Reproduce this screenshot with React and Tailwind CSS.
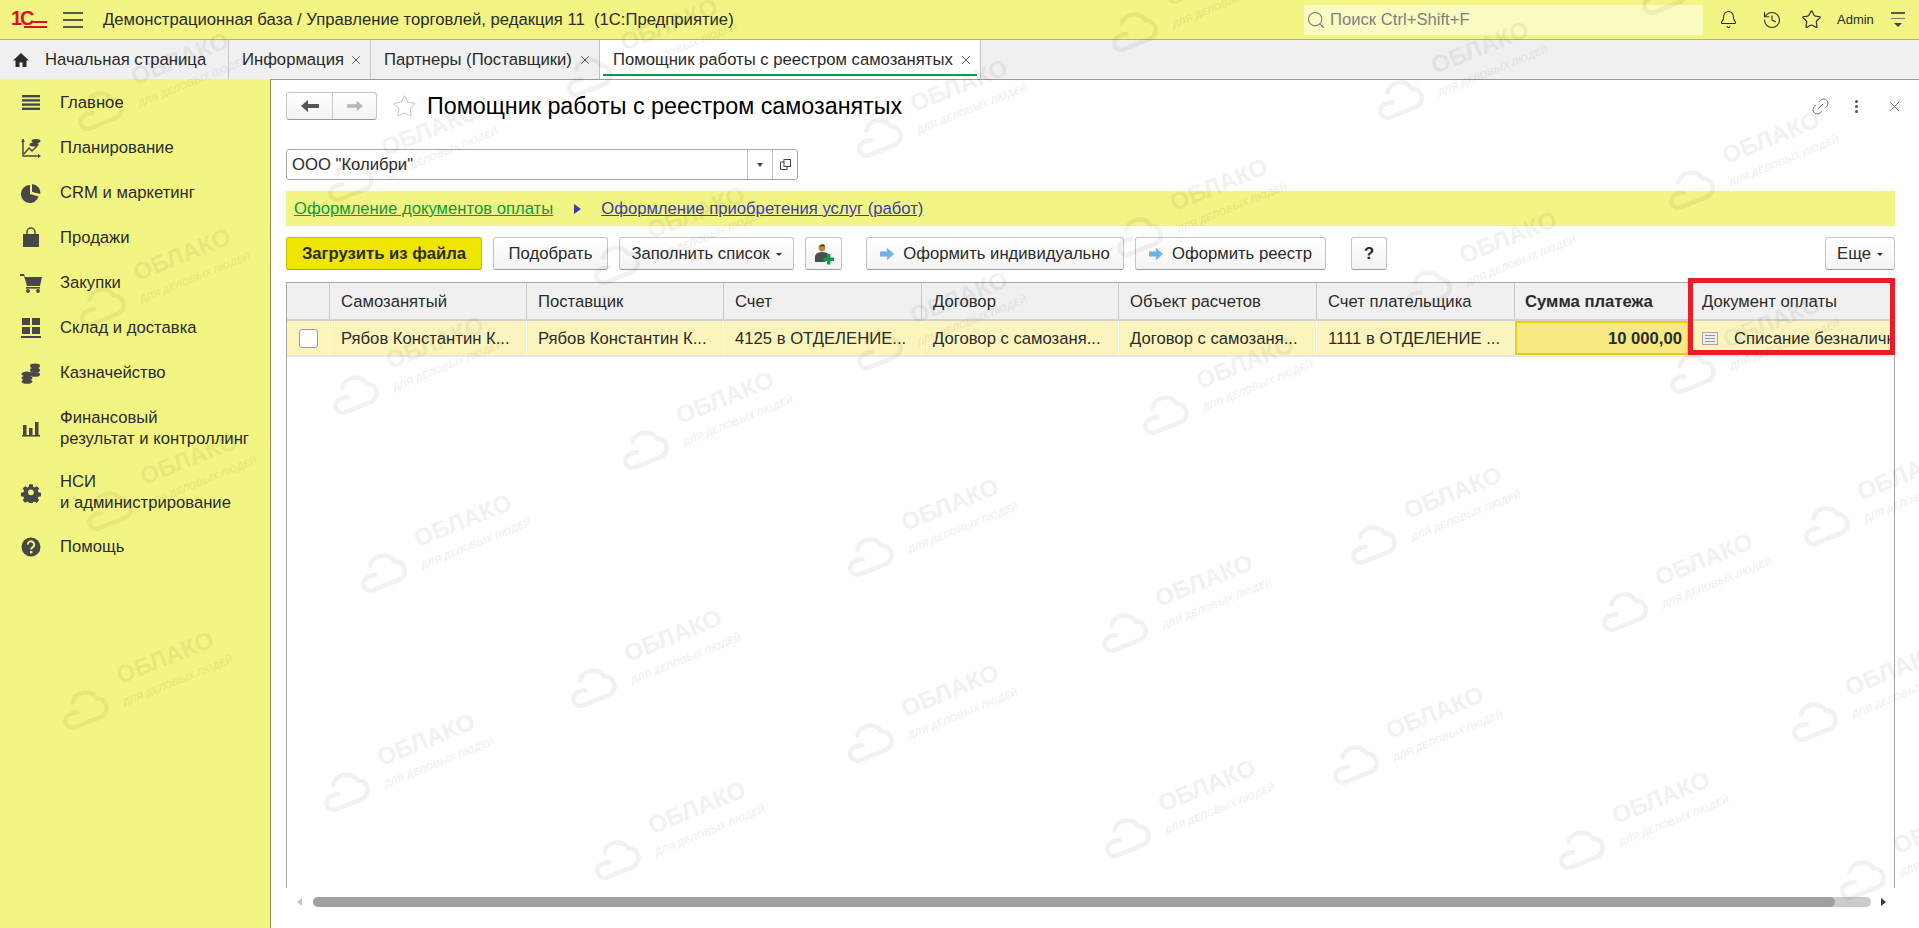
import React from "react";
import { Bell, History, Star, Link2, X, Search } from "lucide-react";

const CLOUDS = [
  [98, 111], [100, 307], [107, 511], [83, 710], [348, 182], [353, 395], [381, 573], [344, 792],
  [614, 265], [587, 77], [643, 450], [591, 688], [615, 860], [877, 138], [877, 350], [868, 557],
  [868, 743], [1132, 32], [1137, 237], [1163, 415], [1122, 633], [1125, 838], [1398, 100],
  [1426, 290], [1371, 545], [1353, 765], [1689, 190], [1690, 374], [1622, 612], [1579, 850],
  [1662, -5], [1824, 526], [1812, 722], [1860, 880],
];

const MENU = [
  { label: ["Главное"], icon: "lines", height: "h-[45px]" },
  { label: ["Планирование"], icon: "plan", height: "h-[45px]" },
  { label: ["CRM и маркетинг"], icon: "pie", height: "h-[45px]" },
  { label: ["Продажи"], icon: "bag", height: "h-[45px]" },
  { label: ["Закупки"], icon: "cart", height: "h-[45px]" },
  { label: ["Склад и доставка"], icon: "grid", height: "h-[45px]" },
  { label: ["Казначейство"], icon: "coins", height: "h-[45px]" },
  { label: ["Финансовый", "результат и контроллинг"], icon: "bars", height: "h-[65px]" },
  { label: ["НСИ", "и администрирование"], icon: "gear", height: "h-[64px]" },
  { label: ["Помощь"], icon: "help", height: "h-[45px]" },
];

const COLUMNS = [
  { title: "Самозанятый", value: "Рябов Константин К...", width: "w-[197px]" },
  { title: "Поставщик", value: "Рябов Константин К...", width: "w-[197px]" },
  { title: "Счет", value: "4125 в ОТДЕЛЕНИЕ...", width: "w-[198px]" },
  { title: "Договор", value: "Договор с самозаня...", width: "w-[197px]" },
  { title: "Объект расчетов", value: "Договор с самозаня...", width: "w-[198px]" },
  { title: "Счет плательщика", value: "1111 в ОТДЕЛЕНИЕ ...", width: "w-[198px]" },
];

const MenuIcon = ({ name }) => {
  const c = "#474747";
  return (
    <svg width="22" height="22" viewBox="0 0 22 22" fill={c}>
      {name === "lines" && (
        <>
          <rect x="2" y="3" width="18" height="2.4" />
          <rect x="2" y="7.2" width="18" height="2.4" />
          <rect x="2" y="11.4" width="18" height="2.4" />
          <rect x="2" y="15.6" width="18" height="2.4" />
        </>
      )}
      {name === "plan" && (
        <>
          <path d="M3 2v17h17" fill="none" stroke={c} strokeWidth="1.5" />
          <path d="M1 5l2-3 2 3zM18 17l3 2-3 2z" />
          <path d="M4 17l5-6 3 3 5-5" fill="none" stroke={c} strokeWidth="1.5" />
          <ellipse cx="16" cy="4" rx="4.5" ry="2" />
          <ellipse cx="14" cy="7.5" rx="4.5" ry="2" />
        </>
      )}
      {name === "pie" && (
        <>
          <path d="M10 3a9 9 0 1 0 8.6 11.5L10 12z" />
          <path d="M12 2v8l8.5 2A9 9 0 0 0 12 2z" />
        </>
      )}
      {name === "bag" && (
        <>
          <rect x="3" y="7" width="16" height="13" />
          <path d="M7 8V5a4 4 0 0 1 8 0v3" fill="none" stroke={c} strokeWidth="1.5" />
        </>
      )}
      {name === "cart" && (
        <>
          <path d="M0 2h4l1 3h17l-2 9H7L4 4H0z" />
          <rect x="6" y="15" width="14" height="1.6" />
          <circle cx="8" cy="19" r="1.9" />
          <circle cx="18" cy="19" r="1.9" />
        </>
      )}
      {name === "grid" && (
        <>
          <rect x="2" y="1" width="8" height="7" />
          <rect x="12" y="1" width="8" height="7" />
          <rect x="2" y="10" width="8" height="7" />
          <rect x="12" y="10" width="8" height="7" />
          <rect x="1" y="19" width="20" height="2" />
        </>
      )}
      {name === "coins" && (
        <>
          <ellipse cx="15" cy="4" rx="5" ry="2.4" />
          <ellipse cx="15" cy="8.2" rx="5" ry="2.4" />
          <ellipse cx="15" cy="12.4" rx="5" ry="2.4" />
          <ellipse cx="7" cy="12" rx="5.5" ry="2.4" />
          <ellipse cx="7" cy="16" rx="5.5" ry="2.4" />
          <ellipse cx="7" cy="19.6" rx="5.5" ry="2.2" />
        </>
      )}
      {name === "bars" && (
        <>
          <rect x="3" y="8" width="3.5" height="10" />
          <rect x="9" y="11" width="3.5" height="7" />
          <rect x="15" y="5" width="3.5" height="13" />
          <rect x="2" y="18" width="18" height="1.6" />
        </>
      )}
      {name === "gear" && (
        <path
          fillRule="evenodd"
          d="M9 2h4l.6 3 1.7.8 2.6-1.6 2.8 2.8-1.6 2.6.7 1.7 3 .7v4l-3 .6-.8 1.7 1.6 2.6-2.8 2.8-2.5-1.6-1.7.7-.6 3H9l-.6-3-1.7-.7-2.6 1.6-2.8-2.8 1.6-2.6-.7-1.7-3-.6v-4l3-.7.7-1.7L1.3 7l2.8-2.8 2.6 1.6 1.7-.8zM11 8a3.4 3.4 0 1 0 0 6.8A3.4 3.4 0 0 0 11 8z"
          transform="translate(1.6 1.6) scale(0.85)"
        />
      )}
      {name === "help" && (
        <>
          <circle cx="11" cy="11" r="9.5" />
          <path d="M7.8 8.5a3.2 3.2 0 1 1 4.8 2.8c-1 .6-1.4 1-1.4 2.2" fill="none" stroke="#f3f583" strokeWidth="2" />
          <rect x="10" y="15" width="2.4" height="2.4" fill="#f3f583" />
        </>
      )}
    </svg>
  );
};

const Logo1C = () => (
  <svg width="36" height="20" viewBox="0 0 36 20" className="shrink-0">
    <text x="0" y="15" fontFamily="Liberation Sans" fontWeight="700" fontSize="20" fill="#d8131b">1</text>
    <text x="9" y="15" fontFamily="Liberation Sans" fontWeight="700" fontSize="20" fill="#d8131b">С</text>
    <rect x="22" y="11" width="14" height="2" fill="#d8131b" />
    <rect x="13" y="16" width="23" height="2" fill="#d8131b" />
  </svg>
);

const Tab = ({ children, active, width }) => (
  <div
    className={`${width} h-full flex items-center justify-between pl-[13px] pr-[7px] border-r border-[#c4c4c4] relative ${
      active ? "bg-white" : ""
    }`}
  >
    <span className="whitespace-nowrap">{children}</span>
    <X size={14} strokeWidth={1.4} className="text-[#333]" />
    {active && <div className="absolute left-[3px] right-[3px] bottom-[3px] h-[2px] bg-[#0d9b4a]" />}
  </div>
);

const Btn = ({ children, width, primary }) => (
  <button
    className={`${width} h-[33px] shrink-0 flex items-center justify-center rounded-[3px] border ${
      primary
        ? "bg-[#efe600] border-[#c9be00] border-b-[#a89e00] font-bold"
        : "bg-gradient-to-b from-white to-[#f3f3f3] border-[#c4c4c4] border-b-[#9a9a9a]"
    }`}
  >
    {children}
  </button>
);

const BlueArrow = () => (
  <svg width="14" height="14" viewBox="0 0 14 14" className="mr-[9px]">
    <path d="M0 4.5h7V1l7 6-7 6V9.5H0z" fill="#6fb2e8" stroke="#a9c8df" strokeWidth="0.5" />
  </svg>
);

const Caret = () => <span className="ml-[6px] mt-[2px] border-x-[3px] border-t-[3px] border-x-transparent border-t-[#333]" />;

const Watermark = () => (
  <svg className="absolute inset-0 pointer-events-none" width="1919" height="928">
    {CLOUDS.map(([x, y]) => (
      <g key={`${x}-${y}`} transform={`translate(${x} ${y})`} fill="#000" opacity="0.05">
        <g transform="rotate(-22)">
          <path
            d="M-14 13H14a9.5 9.5 0 0 0 3-18.5A13.5 13.5 0 0 0-7-11M-6 0a10 7 0 0 0-8-1a7 7 0 0 0 0 14"
            fill="none"
            stroke="#000"
            strokeWidth="4.5"
            strokeLinecap="round"
          />
        </g>
        <text
          transform="translate(85 -45) rotate(-22)"
          textAnchor="middle"
          fontFamily="Liberation Sans"
          fontWeight="700"
          fontSize="24"
        >
          ОБЛАКО
        </text>
        <text
          transform="translate(96 -26) rotate(-22)"
          textAnchor="middle"
          fontFamily="Liberation Sans"
          fontWeight="700"
          fontStyle="italic"
          fontSize="10"
        >
          ДЛЯ ДЕЛОВЫХ ЛЮДЕЙ
        </text>
      </g>
    ))}
  </svg>
);

const App = () => {
  return (
    <div className="relative w-[1919px] h-[928px] overflow-hidden bg-white flex flex-col text-[16.67px] text-[#2b2b2b] font-['Liberation_Sans',Arial,sans-serif]">
      {/* top bar */}
      <header className="h-[40px] shrink-0 flex items-center bg-[#f2f484] border-b border-[#b3b56a] pl-[11px]">
        <Logo1C />
        <div className="ml-[16px] w-[20px] flex flex-col gap-[5px]">
          <div className="h-[2px] bg-[#555]" />
          <div className="h-[2px] bg-[#555]" />
          <div className="h-[2px] bg-[#555]" />
        </div>
        <span className="ml-[20px] whitespace-pre">Демонстрационная база / Управление торговлей, редакция 11  (1С:Предприятие)</span>
        <div className="ml-auto w-[399px] h-[30px] flex items-center bg-[#f9fbc0] rounded-[2px] pl-[2px] text-[#808080]">
          <Search size={20} strokeWidth={1.3} className="text-[#777]" />
          <span className="ml-[4px]">Поиск Ctrl+Shift+F</span>
        </div>
        <div className="w-[216px] shrink-0 flex items-center">
          <Bell size={19} strokeWidth={1.3} className="ml-[16px]" />
          <History size={20} strokeWidth={1.3} className="ml-[24px]" />
          <Star size={21} strokeWidth={1.3} className="ml-[19px]" />
          <span className="ml-[15px] text-[13px]">Admin</span>
          <div className="ml-[17px] w-[14px] flex flex-col items-center gap-[4px]">
            <div className="h-[2px] w-full bg-[#555]" />
            <div className="h-[1px] w-full bg-[#777]" />
            <div className="border-x-[4px] border-t-[4px] border-x-transparent border-t-[#444]" />
          </div>
        </div>
      </header>

      {/* open tabs */}
      <nav className="h-[40px] shrink-0 flex bg-[#f0f0f0] border-b border-[#9a9a9a]">
        <div className="w-[229px] h-full flex items-center border-r border-[#c4c4c4] pl-[12px]">
          <svg width="18" height="18" viewBox="0 0 18 18" fill="#2b2b2b">
            <path d="M9 2L1 9.5h2.5V16h4v-4.5h3V16h4V9.5H17z" />
          </svg>
          <span className="ml-[15px] whitespace-nowrap">Начальная страница</span>
        </div>
        <Tab width="w-[142px]">Информация</Tab>
        <Tab width="w-[229px]">Партнеры (Поставщики)</Tab>
        <Tab width="w-[381px]" active>
          Помощник работы с реестром самозанятых
        </Tab>
      </nav>

      <div className="flex-1 flex min-h-0">
        {/* sections */}
        <aside className="w-[271px] shrink-0 bg-[#f3f583] border-r border-[#8f8f4d] leading-[21px] -mt-px pt-px">
          {MENU.map((item) => (
            <div key={item.label[0]} className={`flex items-center pl-[20px] ${item.height}`}>
              <MenuIcon name={item.icon} />
              <div className="ml-[18px]">
                {item.label.map((line) => (
                  <div key={line} className="whitespace-nowrap">{line}</div>
                ))}
              </div>
            </div>
          ))}
        </aside>

        {/* form */}
        <main className="flex-1 min-w-0 flex flex-col pl-[15px] pr-[24px] pt-[12px]">
          <div className="h-[28px] flex items-center shrink-0">
            <div className="flex h-full w-[91px] rounded-[3px] border border-[#c8c8c8] border-b-[#9a9a9a] bg-gradient-to-b from-white to-[#f3f3f3]">
              <div className="w-[46px] flex items-center justify-center border-r border-[#c8c8c8]">
                <svg width="18" height="12" viewBox="0 0 18 12" fill="#555">
                  <path d="M0 6l7-6v4h11v4H7v4z" />
                </svg>
              </div>
              <div className="flex-1 flex items-center justify-center">
                <svg width="16" height="12" viewBox="0 0 18 12" fill="#b8b8b8">
                  <path d="M18 6l-7-6v4H0v4h11v4z" />
                </svg>
              </div>
            </div>
            <Star size={25} strokeWidth={1} className="ml-[15px] text-[#c9c9c9]" />
            <h1 className="ml-[10px] text-[23.3px] font-normal text-black whitespace-nowrap">Помощник работы с реестром самозанятых</h1>
            <div className="ml-auto flex items-center">
              <Link2 size={21} strokeWidth={1} className="-rotate-45 text-[#666]" />
              <div className="ml-[24px] flex flex-col gap-[2px]">
                <div className="w-[3px] h-[3px] rounded-full bg-[#555]" />
                <div className="w-[3px] h-[3px] rounded-full bg-[#555]" />
                <div className="w-[3px] h-[3px] rounded-full bg-[#555]" />
              </div>
              <X size={17} strokeWidth={1} className="ml-[28px] mr-[-8px] text-[#444]" />
            </div>
          </div>

          <div className="mt-[29px] w-[512px] h-[31px] shrink-0 flex items-center rounded-[3px] border border-[#a8a8a8]">
            <span className="flex-1 pl-[5px]">ООО "Колибри"</span>
            <div className="w-[25px] h-full flex items-center justify-center border-l border-[#c4c4c4]">
              <span className="border-x-[3px] border-t-[4px] border-x-transparent border-t-[#444]" />
            </div>
            <div className="w-[25px] h-full flex items-center justify-center border-l border-[#c4c4c4]">
              <svg width="13" height="13" viewBox="0 0 13 13" fill="none" stroke="#444">
                <rect x="5" y="1.5" width="6.5" height="7" />
                <path d="M5 4H1.5v7.5H8V9" />
              </svg>
            </div>
          </div>

          <div className="mt-[11px] h-[35px] shrink-0 flex items-center bg-[#f2f484] pl-[8px]">
            <a className="text-[#0b9a3e] underline">Оформление документов оплаты</a>
            <span className="ml-[21px] border-y-[5px] border-l-[7px] border-y-transparent border-l-[#3b3bb0]" />
            <a className="ml-[20px] text-[#3b3bb0] underline">Оформление приобретения услуг (работ)</a>
          </div>

          <div className="mt-[11px] h-[33px] shrink-0 flex items-center">
            <Btn width="w-[196px]" primary>Загрузить из файла</Btn>
            <div className="ml-[11px]"><Btn width="w-[115px]">Подобрать</Btn></div>
            <div className="ml-[11px]"><Btn width="w-[175px]">Заполнить список<Caret /></Btn></div>
            <div className="ml-[11px]">
              <Btn width="w-[37px]">
                <svg width="22" height="22" viewBox="0 0 22 22">
                  <circle cx="9" cy="5" r="3.4" fill="#b9873f" />
                  <path d="M8 1.5h3l1 2H6z" fill="#4b4023" />
                  <path d="M2 19v-5c0-3 3-5 7-5s6 1 7 3l-4 7z" fill="#4a4f55" />
                  <path d="M14 11h3.4v3.6H21V18h-3.6v3.6H14V18h-3.6v-3.4H14z" fill="#0e9c47" />
                </svg>
              </Btn>
            </div>
            <div className="ml-[24px]"><Btn width="w-[258px]"><BlueArrow />Оформить индивидуально</Btn></div>
            <div className="ml-[11px]"><Btn width="w-[191px]"><BlueArrow />Оформить реестр</Btn></div>
            <div className="ml-[25px]"><Btn width="w-[36px]"><span className="font-bold">?</span></Btn></div>
            <div className="ml-auto"><Btn width="w-[70px]">Еще<Caret /></Btn></div>
          </div>

          {/* table */}
          <div className="relative mt-[12px] h-[606px] shrink-0 border border-b-0 border-[#a8a8a8]">
            <div className="h-full overflow-hidden">
              <div className="flex h-[38px] w-max bg-[#f0f0f0] border-b-2 border-[#d0d0d0]">
                <div className="w-[43px] border-r border-[#c8c8c8]" />
                {COLUMNS.map((col) => (
                  <div key={col.title} className={`${col.width} flex items-center pl-[11px] border-r border-[#c8c8c8] whitespace-nowrap`}>{col.title}</div>
                ))}
                <div className="w-[174px] flex items-center pl-[10px] border-r border-[#c8c8c8] font-bold whitespace-nowrap">Сумма платежа</div>
                <div className="w-[204px] flex items-center pl-[13px] whitespace-nowrap">Документ оплаты</div>
              </div>
              <div className="flex h-[36px] w-max bg-[#fbf5bd] border-b-2 border-[#e8e8e8]">
                <div className="w-[43px] flex items-center justify-center border-r border-white">
                  <div className="w-[19px] h-[19px] rounded-[3px] bg-white border border-[#9a9a9a]" />
                </div>
                {COLUMNS.map((col) => (
                  <div key={col.title} className={`${col.width} flex items-center pl-[11px] border-r border-white whitespace-nowrap overflow-hidden`}>{col.value}</div>
                ))}
                <div className="w-[174px] flex items-center justify-end pr-[5px] bg-[#f7e982] border-2 border-[#eccf00] font-bold">10 000,00</div>
                <div className="w-[204px] flex items-center pl-[13px] overflow-hidden whitespace-nowrap">
                  <svg width="16" height="13" viewBox="0 0 16 13" className="shrink-0">
                    <rect x="0.5" y="0.5" width="15" height="12" fill="#eeeeee" stroke="#a8a8a8" />
                    <path d="M3 3.5h10M3 6.5h10M3 9.5h10" stroke="#9a9a9a" />
                  </svg>
                  <span className="ml-[16px]">Списание безналичными</span>
                </div>
              </div>
            </div>
            <div className="absolute left-[1401px] top-[-5px] w-[207px] h-[77px] border-[5px] border-[#ed1c24] pointer-events-none" />
          </div>

          <div className="mt-[9px] h-[10px] shrink-0 flex items-center">
            <span className="ml-[11px] border-y-[4px] border-r-[5px] border-y-transparent border-r-[#c4c4c4]" />
            <div className="ml-[11px] w-[556px] flex-1 h-full rounded-full bg-[#cbcbcb]">
              <div className="w-[1522px] h-full rounded-full bg-[#a0a0a0]" />
            </div>
            <span className="ml-[10px] mr-[9px] border-y-[4px] border-l-[5px] border-y-transparent border-l-[#333]" />
          </div>
        </main>
      </div>

      <Watermark />
    </div>
  );
};

export default App;
